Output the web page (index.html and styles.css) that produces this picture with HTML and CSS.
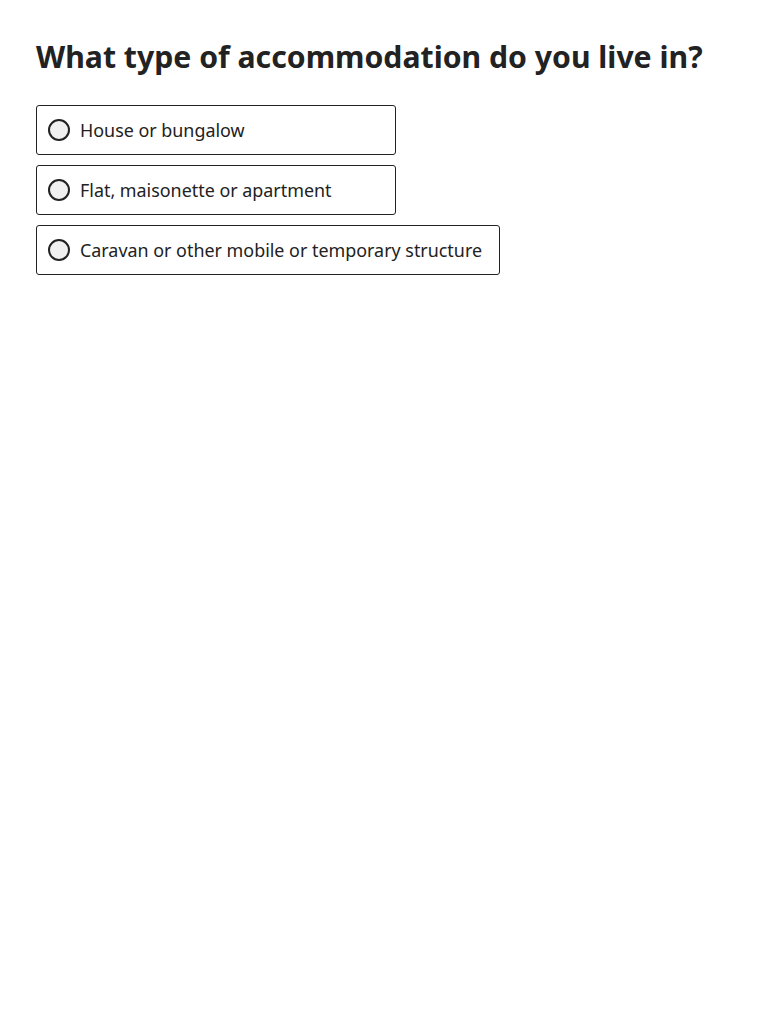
FILE: index.html
```html
<!DOCTYPE html>
<html lang="en">
<head>
<meta charset="utf-8">
<title>Accommodation</title>
<link rel="stylesheet" href="styles.css">
</head>
<body>
<main class="page">
  <h1 class="question">What type of accommodation do you live in?</h1>
  <div class="options">
    <label class="option"><span class="radio"></span><span class="label">House or bungalow</span></label>
    <label class="option"><span class="radio"></span><span class="label">Flat, maisonette or apartment</span></label>
    <label class="option"><span class="radio"></span><span class="label">Caravan or other mobile or temporary structure</span></label>
  </div>
</main>
</body>
</html>
```

FILE: styles.css
```css
* { box-sizing: border-box; }
html, body { margin: 0; padding: 0; background: #fff; }
body {
  font-family: "Noto Sans", "Open Sans", sans-serif;
  color: #222;
}
.page {
  padding: 36px 36px;
}
.question {
  margin: 0 0 27px 0;
  font-size: 30.2px;
  line-height: 42px;
  font-weight: 700;
  color: #222;
}
.options {
  display: flex;
  flex-direction: column;
  align-items: flex-start;
  gap: 10px;
}
.option {
  display: flex;
  align-items: center;
  min-width: 360px;
  height: 50px;
  padding: 0 17px 0 11px;
  border: 1px solid #222;
  border-radius: 3px;
  font-size: 17.9px;
}
.radio {
  width: 22px;
  height: 22px;
  border: 2px solid #222;
  border-radius: 50%;
  background: #f0f0f0;
  margin-right: 10px;
  flex: none;
}
.label { white-space: nowrap; }
```
